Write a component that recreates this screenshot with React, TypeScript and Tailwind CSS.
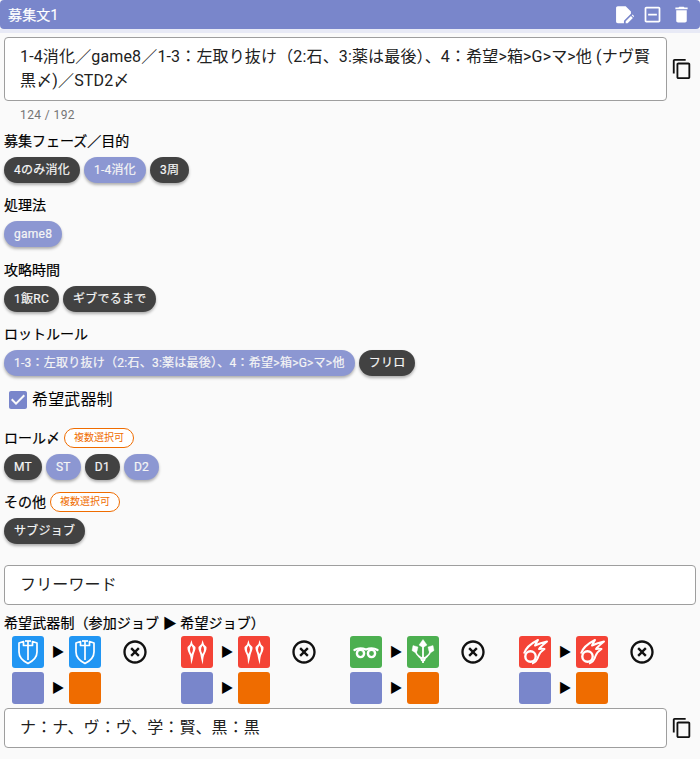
import React from 'react';

const COPY = 'M16 1H4c-1.1 0-2 .9-2 2v14h2V3h12V1zm3 4H8c-1.1 0-2 .9-2 2v14c0 1.1.9 2 2 2h11c1.1 0 2-.9 2-2V7c0-1.1-.9-2-2-2zm0 16H8V7h11v14z';

const CopyIcon = () => (
  <svg viewBox="0 0 24 24" className="w-[22px] h-[22px] shrink-0 fill-[#111]"><path d={COPY} /></svg>
);

const Chip = ({ label, on }: { label: string; on?: boolean }) => (
  <span
    className={`h-[26px] px-2.5 flex items-center rounded-full text-xs tracking-[0.25px] [-webkit-text-stroke:0.2px] text-[#f5f5f5] shadow-[0_2px_3px_rgba(0,0,0,0.3)] ${
      on ? 'bg-[#8c97d2]' : 'bg-[#424242]'
    }`}
  >
    {label}
  </span>
);

const Multi = () => (
  <span className="h-5 px-[9px] flex items-center rounded-full border border-[#ef6c00] text-[10px] [-webkit-text-stroke:0px] text-[#ef6c00] bg-white">
    複数選択可
  </span>
);

const Section = ({ label, chips, multi, className }: { label: string; chips: [string, boolean?][]; multi?: boolean; className: string }) => (
  <div className={className}>
    <div className="h-5 flex items-center gap-1 text-sm [-webkit-text-stroke:0.2px] text-black">
      {label}
      {multi && <Multi />}
    </div>
    <div className="mt-1.5 flex gap-1">
      {chips.map(([t, on]) => (
        <Chip key={t} label={t} on={on} />
      ))}
    </div>
  </div>
);

const Shield = () => (
  <svg viewBox="0 0 32 32" className="w-8 h-8 fill-none stroke-white" strokeWidth="1.7" strokeLinejoin="round">
    <path d="M7 7 L11.5 5.5 V9.5 H20.5 V5.5 L25 7 V16 C25 21.5 21 25 16 27.5 C11 25 7 21.5 7 16 Z" />
    <path d="M16 5 V24" />
    <path d="M13 5 H19" />
  </svg>
);

const Blades = () => (
  <svg viewBox="0 0 32 32" className="w-8 h-8 fill-white">
    <path fillRule="evenodd" d="M10.5 4 L11.5 8 L14.5 11 C15 14 13 16 12.5 19 C12 22 11.5 25 10 28.5 C10 25 9.8 22 9 19.5 C8 17 6 14 6.5 11 L9 8.5 Z M10.4 9.5 C8.4 12 8.6 15 10.4 18 C12.4 15 12.6 12 10.4 9.5 Z" />
    <path fillRule="evenodd" d="M21.5 4 L20.5 8 L17.5 11 C17 14 19 16 19.5 19 C20 22 20.5 25 22 28.5 C22 25 22.2 22 23 19.5 C24 17 26 14 25.5 11 L23 8.5 Z M21.6 9.5 C23.6 12 23.4 15 21.6 18 C19.6 15 19.4 12 21.6 9.5 Z" />
  </svg>
);

const Healer = () => (
  <svg viewBox="0 0 32 32" className="w-8 h-8 fill-none stroke-white">
    <path d="M4.5 14 C8 12 12 12 16 13.5 C20 12 24 12 27.5 14" strokeWidth="2.4" strokeLinecap="round" />
    <circle cx="10.5" cy="17.5" r="3.6" strokeWidth="2.4" />
    <circle cx="21.5" cy="17.5" r="3.6" strokeWidth="2.4" />
  </svg>
);

const Arrows = () => (
  <svg viewBox="0 0 32 32" className="w-8 h-8 fill-white stroke-white">
    <path d="M16 3.5 L20 9 L17 11 H15 L12 9 Z M6 9.5 L11 11 L10 15.5 L8 16.5 L5 14.5 Z M26 9.5 L21 11 L22 15.5 L24 16.5 L27 14.5 Z" strokeWidth="0.4" />
    <path d="M16 10 V27 M8.5 15 C9 19 12 20 14.5 22.5 M23.5 15 C23 19 20 20 17.5 22.5" strokeWidth="1.8" fill="none" />
    <circle cx="16" cy="23" r="1.8" fill="none" strokeWidth="1.4" />
  </svg>
);

const Comet = () => (
  <svg viewBox="0 0 32 32" className="w-8 h-8 fill-none stroke-white" strokeLinejoin="round">
    <circle cx="11.5" cy="20.5" r="5.2" strokeWidth="2.4" />
    <path d="M5 17.5 C7 11 12 7.5 19 4 C17.5 6.5 16.5 8 16 9.5 C19 8 23 6.5 28 5.5 C24 9 21.5 11 20 13 C22 12.5 23.5 12.5 25.5 13 C22.5 15 20.5 17 19.5 20 C18.5 23.5 16.5 26.5 13 27.5" strokeWidth="2" />
  </svg>
);

const Arrow = () => (
  <span className="w-[25px] pl-[3px] text-center text-[13px] leading-none text-black">▶</span>
);

const Job = ({ tile, A, B }: { tile: string; A: React.FC; B: React.FC }) => (
  <div className="w-[169px] flex flex-col gap-1">
    <div className="flex items-center">
      <div className={`w-8 h-8 rounded-[3px] ${tile}`}><A /></div>
      <Arrow />
      <div className={`w-8 h-8 rounded-[3px] ${tile}`}><B /></div>
      <svg viewBox="0 0 24 24" className="ml-[20px] w-7 h-7 fill-[#111]">
        <path d="M14.59 8L12 10.59 9.41 8 8 9.41 10.59 12 8 14.59 9.41 16 12 13.41 14.59 16 16 14.59 13.41 12 16 9.41 14.59 8zM12 2C6.47 2 2 6.47 2 12s4.47 10 10 10 10-4.47 10-10S17.53 2 12 2zm0 18c-4.41 0-8-3.59-8-8s3.59-8 8-8 8 3.59 8 8-3.59 8-8 8z" />
      </svg>
    </div>
    <div className="flex items-center">
      <div className="w-8 h-8 rounded-[3px] bg-[#7986cb]" />
      <Arrow />
      <div className="w-8 h-8 rounded-[3px] bg-[#ef6c00]" />
    </div>
  </div>
);

export default function App() {
  return (
    <div className="w-[700px] h-[759px] overflow-hidden bg-[#fafafa] font-['Roboto','Noto_Sans_CJK_JP',sans-serif] text-black">
      <div className="h-[29px] px-2 flex items-center justify-between rounded-[4px] bg-[#7986cb] text-white">
        <span className="text-sm [-webkit-text-stroke:0.2px] tracking-[0.15px]">募集文1</span>
        <div className="flex items-center gap-2">
          <svg viewBox="0 0 24 24" className="w-[21px] h-[21px] fill-white">
            <path d="M5.5 2.5 H14.5 L20.5 8.5 V11 L12.5 19 V22 H5.5 C4.4 22 3.5 21.1 3.5 20 V4.5 C3.5 3.4 4.4 2.5 5.5 2.5 Z" />
            <path d="M14.5 22 V19.8 L20.5 13.8 L22.7 16 L16.7 22 Z M21.4 12.9 L22.4 11.9 L24 13.6 L23.6 15 Z" />
          </svg>
          <svg viewBox="0 0 24 24" className="w-[21px] h-[21px] fill-white">
            <path d="M19 3H5c-1.11 0-2 .9-2 2v14c0 1.1.89 2 2 2h14c1.11 0 2-.89 2-2V5c0-1.1-.89-2-2-2zm0 16H5V5h14v14zM7 11h10v2H7z" />
          </svg>
          <svg viewBox="0 0 24 24" className="w-[21px] h-[21px] fill-white">
            <path d="M6 19c0 1.1.9 2 2 2h8c1.1 0 2-.9 2-2V7H6v12zM19 4h-3.5l-1-1h-5l-1 1H5v2h14V4z" />
          </svg>
        </div>
      </div>
      <div className="h-1 bg-[#e8eaf6]" />

      <div className="px-1">
        <div className="mt-1 flex items-center gap-[4px]">
          <div className="w-[663px] h-16 shrink-0 pl-[15px] pr-3 flex items-center rounded-[4px] border border-[#9e9e9e] bg-white text-base leading-6 tracking-[0.15px] text-[#212121]">
            <p>1-4消化／game8／1-3：左取り抜け（2:石、3:薬は最後）、4：希望&gt;箱&gt;G&gt;マ&gt;他 (ナヴ賢黒〆)／STD2〆</p>
          </div>
          <CopyIcon />
        </div>
        <div className="mt-[6px] pl-4 h-4 flex items-center text-xs tracking-[0.4px] text-[#757575]">124 / 192</div>

        <Section className="mt-[7.8px]" label="募集フェーズ／目的" chips={[['4のみ消化'], ['1-4消化', true], ['3周']]} />
        <Section className="mt-[12.5px]" label="処理法" chips={[['game8', true]]} />
        <Section className="mt-[12.5px]" label="攻略時間" chips={[['1飯RC'], ['ギブでるまで']]} />
        <Section className="mt-[12.5px]" label="ロットルール" chips={[['1-3：左取り抜け（2:石、3:薬は最後）、4：希望>箱>G>マ>他', true], ['フリロ']]} />

        <div className="mt-[11.7px] h-6 flex items-center gap-[2px] pl-[2px]">
          <svg viewBox="0 0 24 24" className="w-6 h-6 fill-[#7986cb]">
            <path d="M19 3H5c-1.11 0-2 .9-2 2v14c0 1.1.89 2 2 2h14c1.11 0 2-.89 2-2V5c0-1.1-.89-2-2-2zm-9 14l-5-5 1.41-1.41L10 14.17l7.59-7.59L19 8l-9 9z" />
          </svg>
          <span className="text-base tracking-[0.15px]">希望武器制</span>
        </div>

        <Section className="mt-[16px]" label="ロール〆" multi chips={[['MT'], ['ST', true], ['D1'], ['D2', true]]} />
        <Section className="mt-[12.5px]" label="その他" multi chips={[['サブジョブ']]} />

        <div className="mt-[20.5px] h-10 pl-[15px] flex items-center rounded-[4px] border border-[#9e9e9e] bg-white text-base tracking-[0.15px] text-[#212121]">フリーワード</div>
        <div className="mt-2 h-5 flex items-center text-sm [-webkit-text-stroke:0.2px] tracking-[0.1px]">希望武器制（参加ジョブ ▶ 希望ジョブ）</div>

        <div className="mt-[3px] pl-2 flex">
          <Job tile="bg-[#2196f3]" A={Shield} B={Shield} />
          <Job tile="bg-[#f44336]" A={Blades} B={Blades} />
          <Job tile="bg-[#4caf50]" A={Healer} B={Arrows} />
          <Job tile="bg-[#f44336]" A={Comet} B={Comet} />
        </div>

        <div className="mt-1 flex items-center gap-[4px]">
          <div className="w-[663px] h-10 shrink-0 pl-[15px] flex items-center rounded-[4px] border border-[#9e9e9e] bg-white text-base tracking-[0.1px] text-[#212121]">
            ナ：ナ、ヴ：ヴ、学：賢、黒：黒
          </div>
          <CopyIcon />
        </div>
      </div>
    </div>
  );
}
